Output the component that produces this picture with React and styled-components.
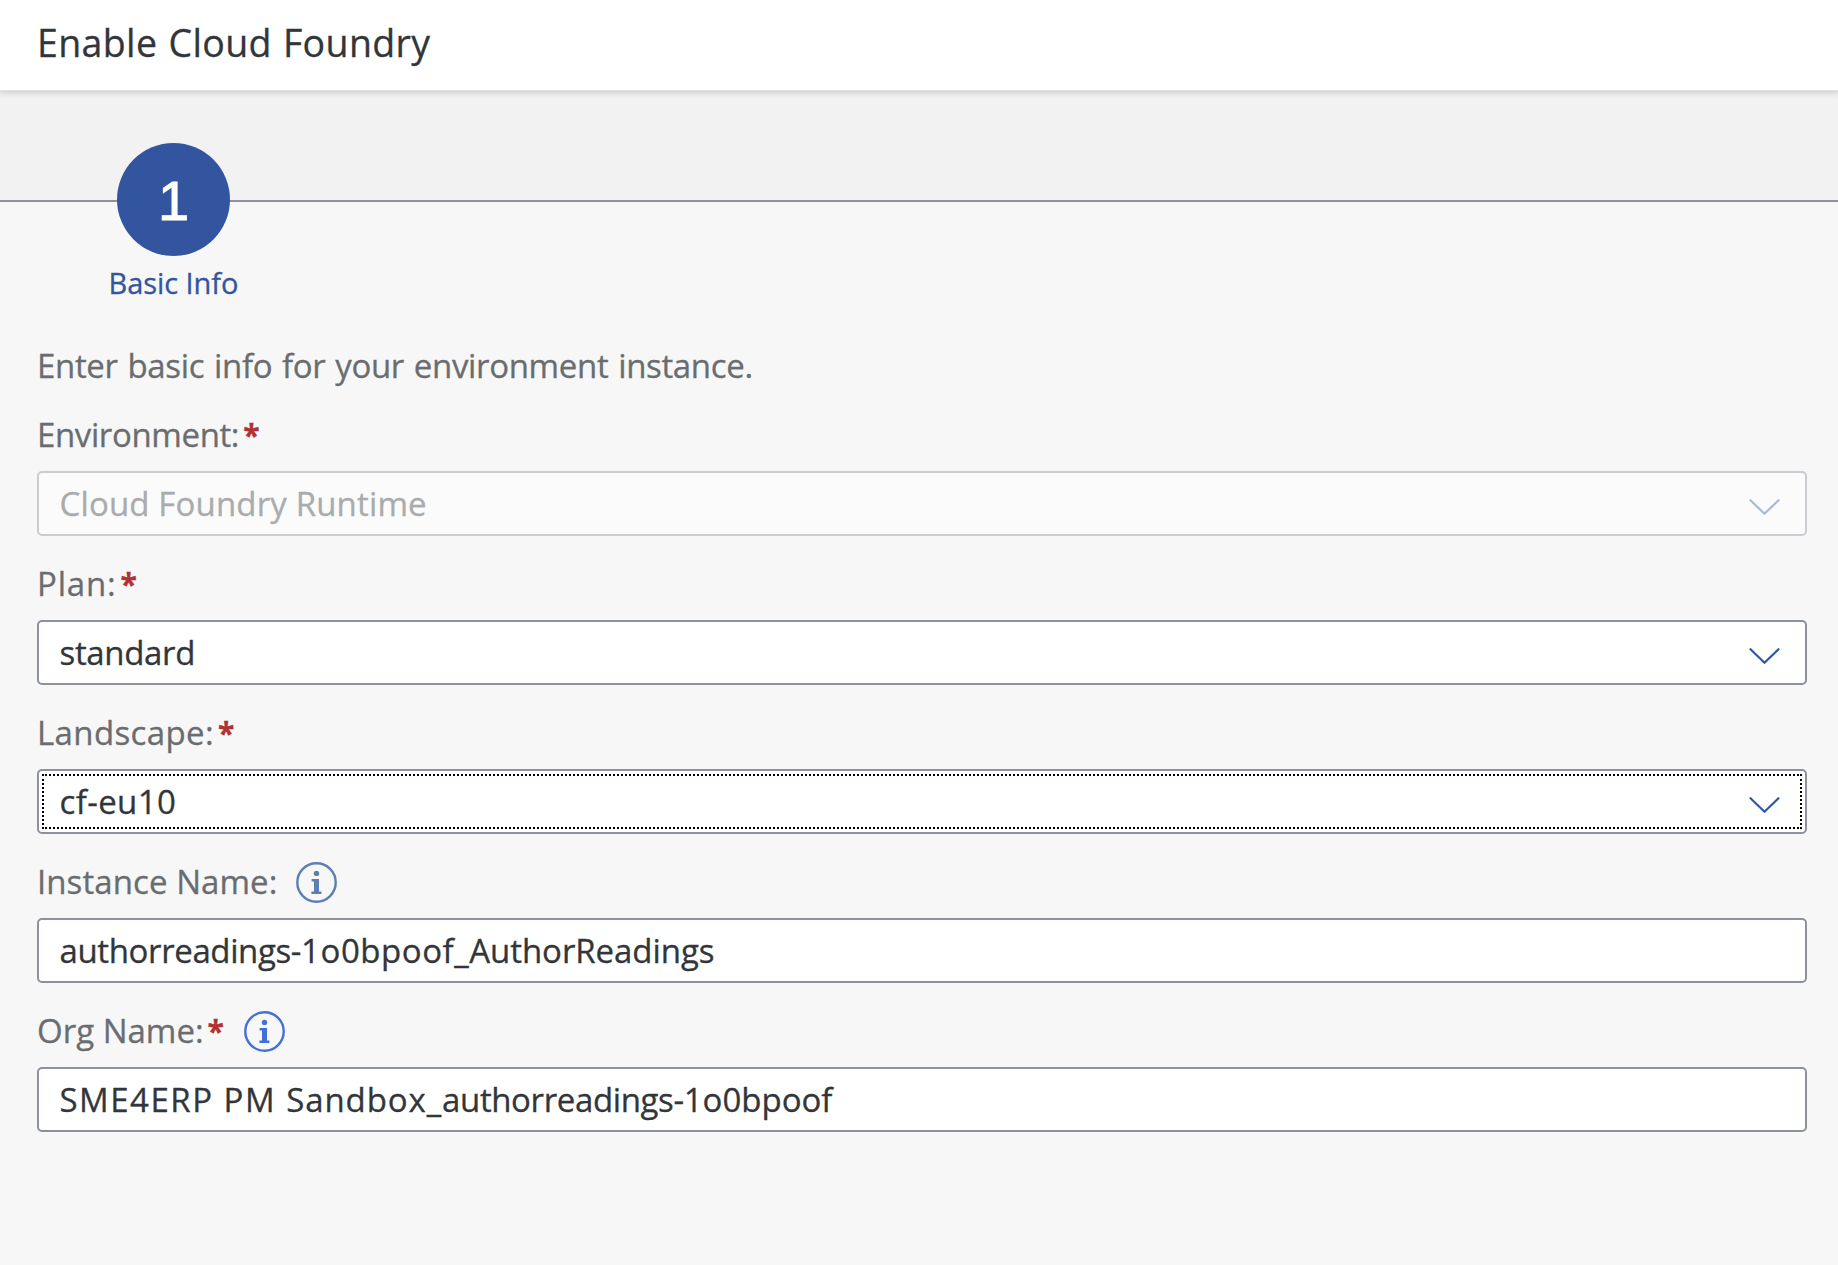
import React from "react";
import styled, { createGlobalStyle } from "styled-components";

const GlobalStyle = createGlobalStyle`
  * { box-sizing: border-box; }
  body {
    margin: 0;
    background: #f7f7f7;
    color: #32363a;
    font-family: "Open Sans", "Noto Sans", sans-serif;
    -webkit-text-stroke: 0.3px currentColor;
    overflow: hidden;
  }
`;

const Page = styled.div`
  display: flex;
  flex-direction: column;
  min-height: 1265px;
`;

const Header = styled.header`
  position: relative;
  z-index: 1;
  height: 90px;
  padding: 0 37px;
  background: #fff;
  box-shadow: 0 1px 0 #e2e2e2, 0 2px 6px 1px rgba(0, 0, 0, 0.15);
`;

const Title = styled.h1`
  margin: 0;
  font-size: 37.5px;
  font-weight: 400;
  line-height: 86px;
  letter-spacing: 0.36px;
  word-spacing: 1px;
`;

const Progress = styled.nav`
  display: flex;
  height: 250px;
  padding: 53px 0 0 94px;
  background: linear-gradient(#f2f2f2 110px, #8f909d 110px, #8f909d 112px, #f7f7f7 112px);
`;

const Step = styled.div`
  display: flex;
  flex-direction: column;
  align-items: center;
  width: 159px;
  color: #33559f;
`;

const StepCircle = styled.span`
  display: flex;
  align-items: center;
  justify-content: center;
  width: 113px;
  height: 113px;
  padding-top: 3px;
  border-radius: 50%;
  background: #33559f;
  color: #fff;
  font-family: "Liberation Sans", Arial, sans-serif;
  font-size: 56px;
  line-height: 60px;
  -webkit-text-stroke: 1px #fff;
`;

const StepName = styled.span`
  margin-top: 7px;
  font-size: 29px;
  line-height: 40px;
  letter-spacing: -0.07px;
`;

const Form = styled.form`
  display: flex;
  flex-direction: column;
  gap: 22px;
  padding: 0 31px 0 37px;
`;

const Intro = styled.p`
  margin: 0 0 -3px;
  color: #6a6d70;
  font-size: 33px;
  line-height: 52px;
  height: 50px;
  letter-spacing: -0.34px;
  word-spacing: 1.6px;
`;

const Field = styled.div`
  display: flex;
  flex-direction: column;
  gap: 12px;
`;

const LabelRow = styled.div`
  display: flex;
  align-items: center;
  height: 50px;
`;

const Label = styled.label`
  padding-top: 2px;
  color: #6a6d70;
  font-size: 33px;
  line-height: 50px;
  letter-spacing: ${(p) => p.$tracking}px;
  white-space: nowrap;
`;

const Required = styled.span`
  width: 17px;
  margin-left: 4px;
  padding-top: 2px;
  color: #b03232;
  font-size: 30px;
  font-weight: 700;
  line-height: 50px;
`;

const InfoIcon = styled.svg`
  width: 41px;
  height: 41px;
  margin: 3px 0 0 19px;
  color: ${(p) => p.$color};
`;

const Control = styled.div`
  display: flex;
  align-items: center;
  justify-content: space-between;
  height: 65px;
  padding: 0 24px 0 20.5px;
  border: 2px solid ${(p) => (p.$disabled ? "#cbccd1" : "#8c919b")};
  border-radius: 5px;
  background: ${(p) => (p.$disabled ? "#fbfbfb" : "#fff")};
  color: ${(p) => (p.$disabled ? "#a9abac" : "#32363a")};
  outline: ${(p) => (p.$focused ? "2px dotted #000" : "none")};
  outline-offset: -7px;
`;

const Value = styled.span`
  font-size: 33px;
  line-height: 60px;
  white-space: nowrap;
`;

const Run = styled.span`
  letter-spacing: ${(p) => p.$tracking}px;
`;

const Chevron = styled.svg`
  width: 32px;
  height: 18px;
  margin-top: 7px;
  color: ${(p) => (p.$disabled ? "#a9b9dc" : "#2f57a6")};
`;

const fields = [
  { label: "Environment:", tracking: -0.38, value: [["Cloud Foundry Runtime", 0.15]], required: true, select: true, disabled: true },
  { label: "Plan:", tracking: 0.8, value: [["standard", -0.34]], required: true, select: true },
  { label: "Landscape:", tracking: 0.38, value: [["cf-eu10", 0.38]], required: true, select: true, focused: true },
  {
    label: "Instance Name:",
    tracking: 0.08,
    value: [["authorreadings-", -0.38], ["1o0bpoof_", 0.55], ["AuthorReadings", -0.07]],
    info: "#5b7fb2",
  },
  {
    label: "Org Name:",
    tracking: 0,
    value: [["SME4ERP PM ", 1.5], ["Sandbox_", 0.9], ["authorreadings-", -0.38], ["1o0bpoof", 0]],
    required: true,
    info: "#4271d6",
  },
];

function Info({ color }) {
  return (
    <InfoIcon $color={color} viewBox="0 0 41 41">
      <circle cx="20.5" cy="20.5" r="19.2" fill="none" stroke="currentColor" strokeWidth="2.4" />
      <circle cx="20.5" cy="11.4" r="2.7" fill="currentColor" />
      <path d="M15.6 17H23v12.4h2.4V32H15.4v-2.6H18v-9.8h-2.4z" fill="currentColor" />
    </InfoIcon>
  );
}

function FormField({ field }) {
  return (
    <Field>
      <LabelRow>
        <Label $tracking={field.tracking}>{field.label}</Label>
        {field.required && <Required>*</Required>}
        {field.info && <Info color={field.info} />}
      </LabelRow>
      <Control $disabled={field.disabled} $focused={field.focused}>
        <Value>
          {field.value.map(([text, tracking]) => (
            <Run key={text} $tracking={tracking}>{text}</Run>
          ))}
        </Value>
        {field.select && (
          <Chevron $disabled={field.disabled} viewBox="0 0 32 18">
            <path d="M1.5 2.2 15.5 15.8 29.5 2.2" fill="none" stroke="currentColor" strokeWidth="2.2" strokeLinecap="round" strokeLinejoin="round" />
          </Chevron>
        )}
      </Control>
    </Field>
  );
}

export default function App() {
  return (
    <Page>
      <GlobalStyle />
      <Header>
        <Title>Enable Cloud Foundry</Title>
      </Header>
      <Progress>
        <Step>
          <StepCircle>1</StepCircle>
          <StepName>Basic Info</StepName>
        </Step>
      </Progress>
      <Form>
        <Intro>Enter basic info for your environment instance.</Intro>
        {fields.map((field) => (
          <FormField key={field.label} field={field} />
        ))}
      </Form>
    </Page>
  );
}
